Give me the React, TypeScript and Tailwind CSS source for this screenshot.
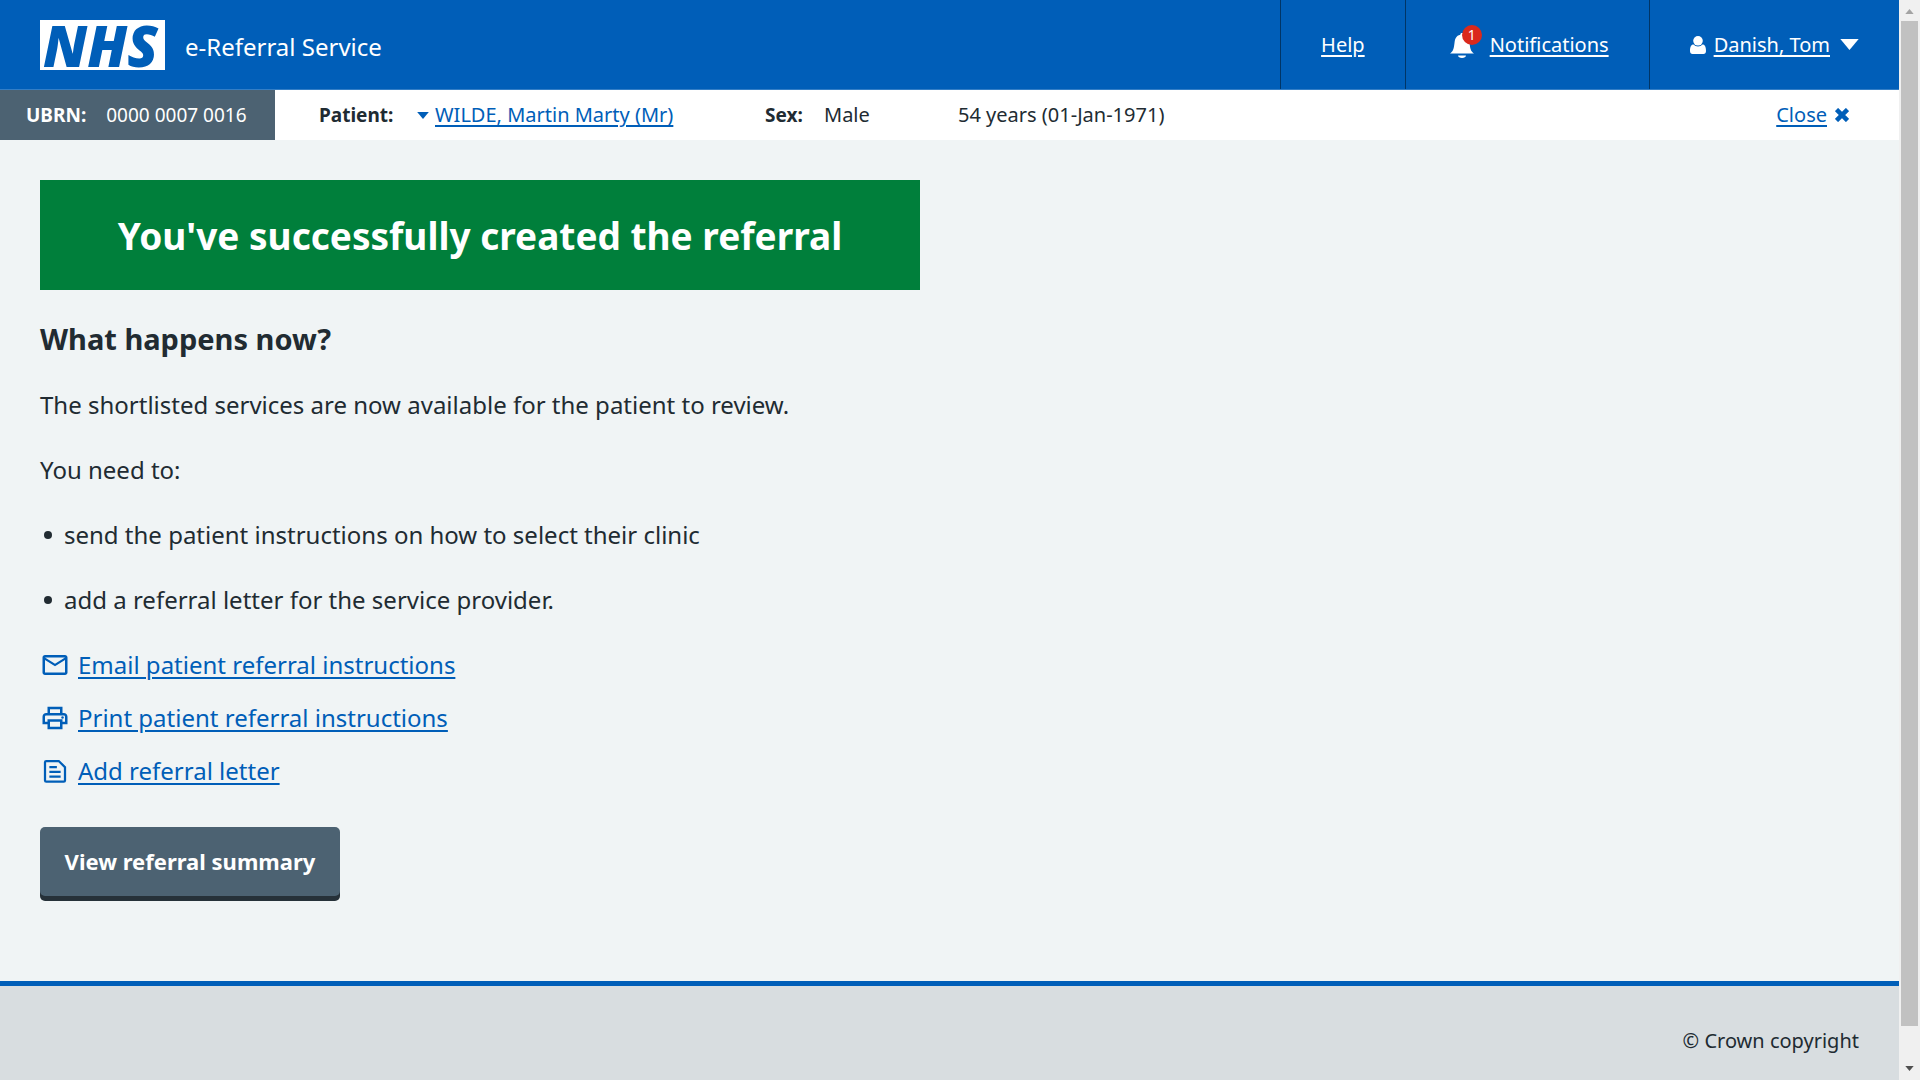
import React from "react";
import { MdMailOutline, MdOutlinePrint } from "react-icons/md";

const link = "underline underline-offset-3 decoration-2";

function Caret({ className }: { className: string }) {
  return (
    <svg viewBox="0 0 20 12" className={className} aria-hidden="true">
      <path d="M0 0h20L10 12z" fill="currentColor" />
    </svg>
  );
}

function Header() {
  return (
    <header className="flex h-[90px] items-stretch justify-between border-b border-[#337ec6] bg-[#005eb8] text-white">
      <div className="flex items-start pt-5 pl-10">
        <div className="h-[50px] w-[125px] bg-white pr-1 text-center font-['Open_Sans',sans-serif] text-[56px] leading-[50px] font-extrabold text-[#005eb8] italic">
          NHS
        </div>
        <span className="ml-5 pt-[11px] text-2xl leading-8">e-Referral Service</span>
      </div>
      <nav className="flex items-stretch text-xl leading-[90px]">
        <div className="border-l border-[#003566] px-10">
          <a href="#help" className={link}>Help</a>
        </div>
        <div className="flex items-center border-l border-[#003566] px-10">
          <span className="relative mr-3 block h-8 w-8">
            <svg viewBox="0 0 24 32" className="absolute top-1 left-1 h-8 w-6" fill="currentColor" aria-hidden="true">
              <path d="M12 0c1 0 1.700.7 1.700 1.700 4.300 1 5.300 4 5.800 8.300.7 6 1.500 8.500 4.500 10.500H0C3 18.500 3.800 16 4.500 10c.5-4.300 1.500-7.300 5.800-8.300C10.300.7 11 0 12 0z" />
              <path d="M8 22.500h8c0 1.500-1.800 2.500-4 2.500s-4-1-4-2.500z" />
            </svg>
            <span className="absolute -top-1 -right-1 h-5 w-5 rounded-full bg-[#da291c] text-center text-sm leading-5">1</span>
          </span>
          <a href="#notifications" className={link}>Notifications</a>
        </div>
        <div className="flex items-center border-l border-[#003566] px-10">
          <svg viewBox="0 0 16 18" className="mr-2 h-[18px] w-4" fill="currentColor" aria-hidden="true">
            <circle cx="8" cy="4.800" r="4.800" />
            <path d="M0 15c0-4 1-6.500 3.500-6.500 1.200 1.200 2.800 2 4.500 2s3.300-.8 4.500-2C15 8.500 16 11 16 15c0 2-1 3-2.500 3h-11C1 18 0 17 0 15z" />
          </svg>
          <a href="#account" className={link}>Danish, Tom</a>
          <Caret className="ml-2.5 h-[11px] w-[19px]" />
        </div>
      </nav>
    </header>
  );
}

function PatientBar() {
  return (
    <section className="flex h-[50px] items-center bg-white text-xl" aria-label="Patient details">
      <div className="flex h-full w-[275px] items-center bg-[#4c6272] pl-[26px] text-[19px] text-white">
        <strong className="font-bold">UBRN:</strong>
        <span className="ml-5">0000 0007 0016</span>
      </div>
      <strong className="ml-11 w-[98px] text-[19px] font-bold">Patient:</strong>
      <a href="#patient" className="flex w-[348px] items-center text-[#005eb8]">
        <Caret className="mr-1.5 h-[7px] w-3" />
        <span className={link}>WILDE, Martin Marty (Mr)</span>
      </a>
      <strong className="w-[59px] text-[19px] font-bold">Sex:</strong>
      <span className="w-[134px]">Male</span>
      <span>54 years (01-Jan-1971)</span>
      <a href="#close" className="mr-[50px] ml-auto flex items-center text-[#005eb8]">
        <span className={link}>Close</span>
        <svg viewBox="0 0 14 14" className="ml-2 h-3.5 w-3.5" stroke="currentColor" strokeWidth="4.500" aria-hidden="true">
          <path d="M1.500 1.500l11 11M12.500 1.500l-11 11" />
        </svg>
      </a>
    </section>
  );
}

function Bullet({ children }: { children: React.ReactNode }) {
  return (
    <li className="flex items-center gap-3 pl-1">
      <span className="h-2 w-2 shrink-0 rounded-full bg-[#212b32]" aria-hidden="true" />
      <span>{children}</span>
    </li>
  );
}

function ActionLink({ href, icon, children }: { href: string; icon: React.ReactNode; children: React.ReactNode }) {
  return (
    <li className="flex items-center text-[#005eb8]">
      <span className="mr-2 flex w-[30px] justify-center">{icon}</span>
      <a href={href} className={link}>{children}</a>
    </li>
  );
}

function LetterIcon() {
  return (
    <svg viewBox="0 0 24 24" className="h-[30px] w-[30px]" fill="none" stroke="currentColor" strokeWidth="1.800" aria-hidden="true">
      <path d="M5 4h10l5 5v10.500a1 1 0 0 1-1 1H5a1 1 0 0 1-1-1V5a1 1 0 0 1 1-1z" />
      <path d="M7.500 8.800h6M7.500 12.600h9M7.500 16.400h9" />
    </svg>
  );
}

function ScrollBar() {
  return (
    <div className="flex w-[21px] shrink-0 flex-col items-center bg-[#f0f0f0]" aria-hidden="true">
      <Caret className="mt-[9px] mb-[7px] h-[5px] w-[9px] rotate-180 text-[#a3a3a3]" />
      <div className="w-[17px] flex-1 bg-[#c1c1c1]" />
      <Caret className="mt-10 mb-[9px] h-[5px] w-[9px] text-[#505050]" />
    </div>
  );
}

export default function App() {
  return (
    <div className="flex min-h-screen bg-[#f0f4f5] font-['Noto_Sans',sans-serif] text-[#212b32]">
      <div className="flex flex-1 flex-col">
        <Header />
        <PatientBar />
        <main className="flex-1 px-10 pt-10 text-2xl leading-[33px]">
          <h1 className="flex h-[110px] w-[880px] max-w-full items-center justify-center bg-[#007f3b] text-[37px] font-bold text-white">
            You've successfully created the referral
          </h1>
          <h2 className="mt-8 text-[29px] leading-[34px] font-bold">What happens now?</h2>
          <p className="mt-8">The shortlisted services are now available for the patient to review.</p>
          <p className="mt-8">You need to:</p>
          <ul className="mt-8 space-y-8">
            <Bullet>send the patient instructions on how to select their clinic</Bullet>
            <Bullet>add a referral letter for the service provider.</Bullet>
          </ul>
          <ul className="mt-8 space-y-5">
            <ActionLink href="#email" icon={<MdMailOutline size={30} />}>Email patient referral instructions</ActionLink>
            <ActionLink href="#print" icon={<MdOutlinePrint size={30} />}>Print patient referral instructions</ActionLink>
            <ActionLink href="#letter" icon={<LetterIcon />}>Add referral letter</ActionLink>
          </ul>
          <button type="button" className="mt-10 h-[69px] w-[300px] rounded-[5px] bg-[#4c6272] text-[22px] font-bold text-white shadow-[0_5px_0_#263139]">
            View referral summary
          </button>
        </main>
        <footer className="flex h-[99px] items-center justify-end border-t-5 border-[#005eb8] bg-[#d8dde0] pt-4 pr-10 text-xl">
          © Crown copyright
        </footer>
      </div>
      <ScrollBar />
    </div>
  );
}
